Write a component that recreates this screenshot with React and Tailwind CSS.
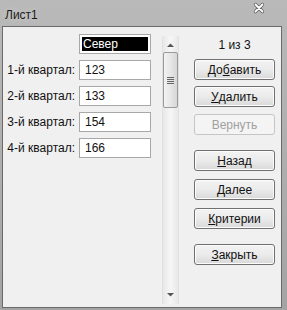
import React from "react";

const font = { fontFamily: '"Liberation Sans", Arial, sans-serif' };

function Btn({ children, disabled, top }) {
  return (
    <div
      className={
        "w-[81px] h-[21px] rounded-[3px] border flex items-center justify-center text-[12px] leading-none " +
        (disabled
          ? "border-[#c5c5c5] bg-[#f4f4f4] text-[#a0a0a0]"
          : "border-[#707070] bg-gradient-to-b from-[#f3f3f3] via-[#ebebeb] to-[#d9d9d9] text-[#111] shadow-[inset_0_0_0_1px_#fcfcfc]")
      }
      style={{ marginTop: top }}
    >
      {children}
    </div>
  );
}

function Row({ label, value }) {
  return (
    <div className="flex items-center h-[20px] mt-[6px]">
      <div className="w-[72px] text-right text-[12px] text-[#111] pr-[0px]">{label}</div>
      <div className="ml-[4px] w-[72px] h-[20px] bg-white border border-[#a8a8a8] flex items-center pl-[5px] text-[12px] text-[#111]">
        {value}
      </div>
    </div>
  );
}

export default function App() {
  return (
    <div
      className="w-[287px] h-[310px] bg-gradient-to-b from-[#b9b9b9] to-[#a4a4a4] flex flex-col overflow-hidden"
      style={font}
    >
      <div className="h-[26px] flex items-start justify-between shrink-0">
        <div className="pl-[5px] pt-[6px] text-[12px] text-[#1a1a1a] [text-shadow:0_0_6px_#d8d8d8]">Лист1</div>
        <svg width="12" height="12" viewBox="0 0 12 12" className="mr-[22px] mt-[2px]">
          <path d="M2.5 2.5 L9.5 9.5 M9.5 2.5 L2.5 9.5" stroke="#5a5a5a" strokeWidth="3.2" strokeLinecap="round" />
          <path d="M2.5 2.5 L9.5 9.5 M9.5 2.5 L2.5 9.5" stroke="#ffffff" strokeWidth="1.8" strokeLinecap="round" />
        </svg>
      </div>
      <div className="flex-1 ml-[2px] mr-[5px] mb-[2px] border border-[#6a6a6a] bg-[#f0f0f0] flex">
        <div className="w-[159px] pt-[7px] flex flex-col">
          <div className="flex items-center h-[20px]">
            <div className="w-[72px]" />
            <div className="ml-[4px] w-[72px] h-[20px] bg-white border border-[#a8a8a8] p-[2px]">
              <div className="h-full bg-black text-white text-[12px] leading-[14px] pl-[1px]">Север</div>
            </div>
          </div>
          <Row label="1-й квартал:" value="123" />
          <Row label="2-й квартал:" value="133" />
          <Row label="3-й квартал:" value="154" />
          <Row label="4-й квартал:" value="166" />
        </div>
        <div className="w-[17px] mt-[9px] mb-[3px] bg-gradient-to-r from-[#e8e8e8] via-[#f6f6f6] to-[#e8e8e8] border-x border-[#e0e0e0] flex flex-col items-center">
          <svg width="9" height="6" viewBox="0 0 9 6" className="mt-[6px]">
            <path d="M1 5 L4.5 1.5 L8 5 Z" fill="#555" />
          </svg>
          <div className="mt-[4px] w-[15px] h-[56px] rounded-[2px] border border-[#9a9a9a] bg-gradient-to-r from-[#f2f2f2] via-[#e6e6e6] to-[#d6d6d6] flex flex-col items-center justify-center gap-[1px]">
            <div className="w-[7px] h-[1px] bg-[#666]" />
            <div className="w-[7px] h-[1px] bg-[#666]" />
            <div className="w-[7px] h-[1px] bg-[#666]" />
            <div className="w-[7px] h-[1px] bg-[#666]" />
          </div>
          <div className="flex-1" />
          <svg width="9" height="6" viewBox="0 0 9 6" className="mb-[6px]">
            <path d="M1 1 L4.5 4.5 L8 1 Z" fill="#555" />
          </svg>
        </div>
        <div className="ml-[15px] w-[81px] pt-[10px] flex flex-col">
          <div className="h-[16px] text-center text-[12px] text-[#111] leading-[16px]">1 из 3</div>
          <Btn top="6px">До<u>б</u>авить</Btn>
          <Btn top="6px"><u>У</u>далить</Btn>
          <Btn top="7px" disabled>Вернуть</Btn>
          <Btn top="15px"><u>Н</u>азад</Btn>
          <Btn top="8px"><u>Д</u>алее</Btn>
          <Btn top="8px"><u>К</u>ритерии</Btn>
          <Btn top="15px"><u>З</u>акрыть</Btn>
        </div>
      </div>
    </div>
  );
}
